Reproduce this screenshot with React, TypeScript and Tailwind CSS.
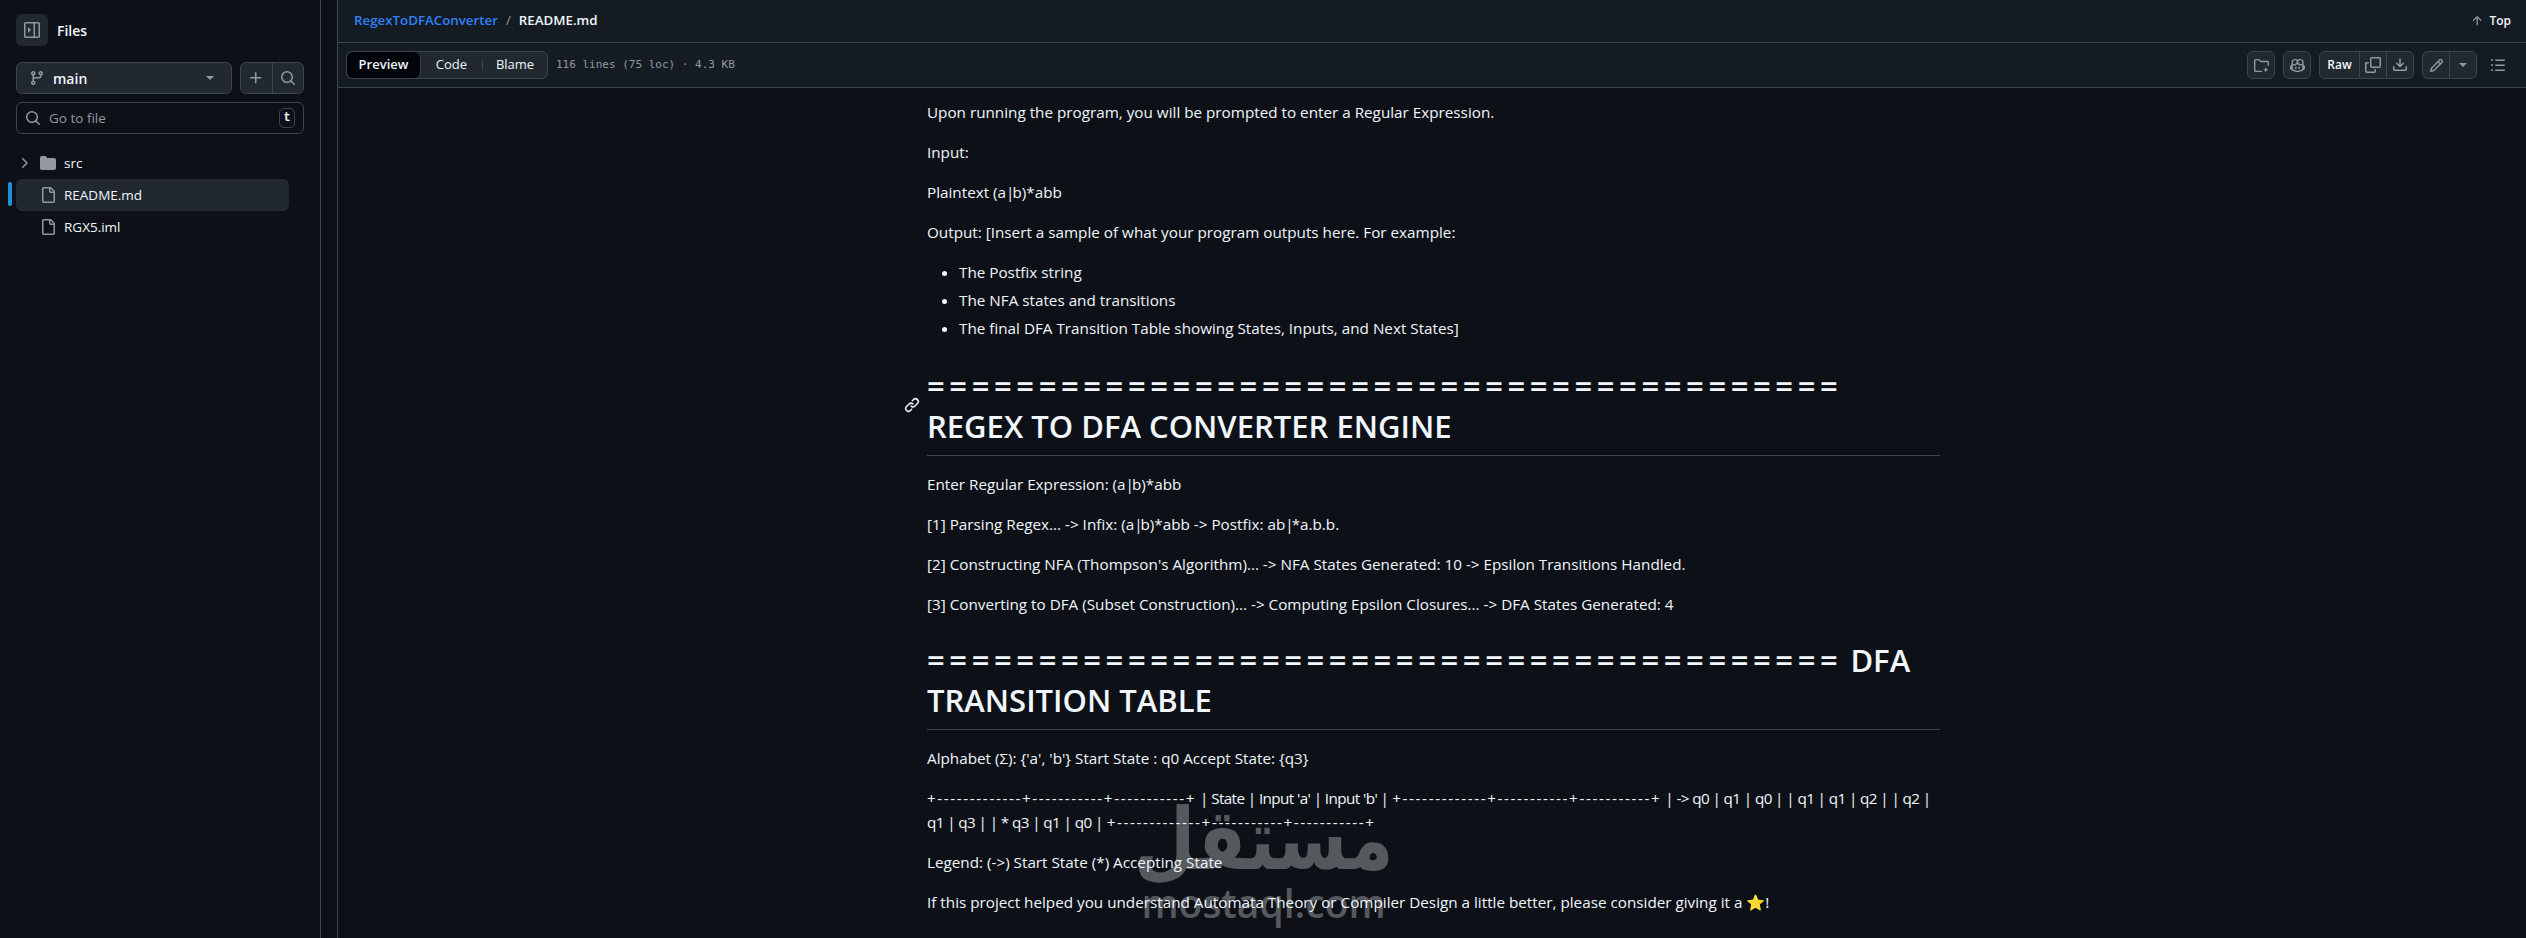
import type { ReactNode } from "react"

const font = { fontFamily: '"Open Sans", "Noto Sans", sans-serif' }

const Octicon = ({ d, size = 16, className = "" }: { d: string | string[]; size?: number; className?: string }) => (
  <svg width={size} height={size} viewBox="0 0 16 16" fill="currentColor" className={className}>
    {(Array.isArray(d) ? d : [d]).map((p) => (
      <path key={p} d={p} />
    ))}
  </svg>
)

const icons = {
  file: "M2 1.75C2 .784 2.784 0 3.75 0h6.586c.464 0 .909.184 1.237.513l2.914 2.914c.329.328.513.773.513 1.237v9.586A1.75 1.75 0 0 1 13.25 16h-9.5A1.75 1.75 0 0 1 2 14.25Zm1.75-.25a.25.25 0 0 0-.25.25v12.5c0 .138.112.25.25.25h9.5a.25.25 0 0 0 .25-.25V6h-2.75A1.75 1.75 0 0 1 9 4.25V1.5Zm6.75.062V4.25c0 .138.112.25.25.25h2.688l-.011-.013-2.914-2.914-.013-.011Z",
  plus: "M7.75 2a.75.75 0 0 1 .75.75V7h4.25a.75.75 0 0 1 0 1.5H8.5v4.25a.75.75 0 0 1-1.5 0V8.5H2.75a.75.75 0 0 1 0-1.5H7V2.75A.75.75 0 0 1 7.75 2Z",
  search: "M10.68 11.74a6 6 0 0 1-7.922-8.982 6 6 0 0 1 8.982 7.922l3.04 3.04a.749.749 0 0 1-.326 1.275.749.749 0 0 1-.734-.215ZM11.5 7a4.499 4.499 0 1 0-8.997 0A4.499 4.499 0 0 0 11.5 7Z",
  chevron: "M6.22 3.22a.75.75 0 0 1 1.06 0l4.25 4.25a.75.75 0 0 1 0 1.06l-4.25 4.25a.751.751 0 0 1-1.042-.018.751.751 0 0 1-.018-1.042L9.94 8 6.22 4.28a.75.75 0 0 1 0-1.06Z",
  folder: "M1.75 1A1.75 1.75 0 0 0 0 2.75v10.5C0 14.216.784 15 1.75 15h12.5A1.75 1.75 0 0 0 16 13.25v-8.5A1.75 1.75 0 0 0 14.25 3H7.5a.25.25 0 0 1-.2-.1l-.9-1.2C6.07 1.26 5.55 1 5 1H1.75Z",
  branch: "M9.5 3.25a2.25 2.25 0 1 1 3 2.122V6A2.5 2.5 0 0 1 10 8.5H6a1 1 0 0 0-1 1v1.128a2.251 2.251 0 1 1-1.5 0V5.372a2.25 2.25 0 1 1 1.5 0v1.836A2.493 2.493 0 0 1 6 7h4a1 1 0 0 0 1-1v-.628A2.25 2.25 0 0 1 9.5 3.25Zm-6 0a.75.75 0 1 0 1.5 0 .75.75 0 0 0-1.5 0Zm8.25-.75a.75.75 0 1 0 0 1.5.75.75 0 0 0 0-1.5ZM4.25 12a.75.75 0 1 0 0 1.5.75.75 0 0 0 0-1.5Z",
  sidebar: [
    "M6.823 7.823a.25.25 0 0 1 0 .354l-2.396 2.396A.25.25 0 0 1 4 10.396V5.604a.25.25 0 0 1 .427-.177Z",
    "M1.75 0h12.5C15.216 0 16 .784 16 1.75v12.5A1.75 1.75 0 0 1 14.25 16H1.75A1.75 1.75 0 0 1 0 14.25V1.75C0 .784.784 0 1.75 0ZM1.5 1.75v12.5c0 .138.112.25.25.25H9.5v-13H1.75a.25.25 0 0 0-.25.25ZM11 14.5h3.25a.25.25 0 0 0 .25-.25V1.75a.25.25 0 0 0-.25-.25H11Z",
  ],
  arrowUp: "M3.47 7.78a.75.75 0 0 1 0-1.06l4.25-4.25a.75.75 0 0 1 1.06 0l4.25 4.25a.751.751 0 0 1-.018 1.042.751.751 0 0 1-1.042.018L9 4.81v7.44a.75.75 0 0 1-1.5 0V4.81L4.53 7.78a.75.75 0 0 1-1.06 0Z",
  copy: [
    "M0 6.75C0 5.784.784 5 1.75 5h1.5a.75.75 0 0 1 0 1.5h-1.5a.25.25 0 0 0-.25.25v7.5c0 .138.112.25.25.25h7.5a.25.25 0 0 0 .25-.25v-1.5a.75.75 0 0 1 1.5 0v1.5A1.75 1.75 0 0 1 9.25 16h-7.5A1.75 1.75 0 0 1 0 14.25Z",
    "M5 1.75C5 .784 5.784 0 6.75 0h7.5C15.216 0 16 .784 16 1.75v7.5A1.75 1.75 0 0 1 14.25 11h-7.5A1.75 1.75 0 0 1 5 9.25Zm1.75-.25a.25.25 0 0 0-.25.25v7.5c0 .138.112.25.25.25h7.5a.25.25 0 0 0 .25-.25v-7.5a.25.25 0 0 0-.25-.25Z",
  ],
  download: [
    "M2.75 14A1.75 1.75 0 0 1 1 12.25v-2.5a.75.75 0 0 1 1.5 0v2.5c0 .138.112.25.25.25h10.5a.25.25 0 0 0 .25-.25v-2.5a.75.75 0 0 1 1.5 0v2.5A1.75 1.75 0 0 1 13.25 14Z",
    "M7.25 7.689V2a.75.75 0 0 1 1.5 0v5.689l1.97-1.969a.749.749 0 1 1 1.06 1.06l-3.25 3.25a.749.749 0 0 1-1.06 0L4.22 6.78a.749.749 0 1 1 1.06-1.06l1.97 1.969Z",
  ],
  pencil: "M11.013 1.427a1.75 1.75 0 0 1 2.474 0l1.086 1.086a1.75 1.75 0 0 1 0 2.474l-8.61 8.61c-.21.21-.47.364-.756.445l-3.251.93a.75.75 0 0 1-.927-.928l.929-3.25c.081-.286.235-.547.445-.758l8.61-8.61Zm.176 4.823L9.75 4.81l-6.286 6.287a.253.253 0 0 0-.064.108l-.558 1.953 1.953-.558a.253.253 0 0 0 .108-.064Zm1.238-3.763a.25.25 0 0 0-.354 0L10.811 3.75l1.439 1.44 1.263-1.263a.25.25 0 0 0 0-.354Z",
  list: "M5.75 2.5h8.5a.75.75 0 0 1 0 1.5h-8.5a.75.75 0 0 1 0-1.5Zm0 5h8.5a.75.75 0 0 1 0 1.5h-8.5a.75.75 0 0 1 0-1.5Zm0 5h8.5a.75.75 0 0 1 0 1.5h-8.5a.75.75 0 0 1 0-1.5ZM2 14a1 1 0 1 1 0-2 1 1 0 0 1 0 2Zm1-6a1 1 0 1 1-2 0 1 1 0 0 1 2 0ZM2 4a1 1 0 1 1 0-2 1 1 0 0 1 0 2Z",
  copilot: [
    "M7.998 15.035c-4.562 0-7.873-2.914-7.998-3.749V9.338c.085-.628.677-1.686 1.588-2.065.013-.07.024-.143.036-.218.029-.183.06-.384.126-.612-.201-.508-.254-1.084-.254-1.656 0-.87.128-1.769.693-2.484.579-.733 1.494-1.124 2.724-1.261 1.206-.134 2.262.034 2.944.765.05.053.096.108.139.165.044-.057.094-.112.143-.165.682-.731 1.738-.899 2.944-.765 1.23.137 2.145.528 2.724 1.261.566.715.693 1.614.693 2.484 0 .572-.053 1.148-.254 1.656.066.228.098.429.126.612.012.076.024.148.037.218.924.385 1.522 1.471 1.591 2.095v1.872c0 .766-3.351 3.795-8.002 3.795Zm0-1.485c2.28 0 4.584-1.11 5.002-1.433V7.862l-.023-.116c-.49.21-1.075.291-1.727.291-1.146 0-2.059-.327-2.71-.991A3.222 3.222 0 0 1 8 6.303a3.24 3.24 0 0 1-.544.743c-.65.664-1.563.991-2.71.991-.652 0-1.236-.081-1.727-.291l-.023.116v4.255c.419.323 2.722 1.433 5.002 1.433ZM6.762 2.83c-.193-.206-.637-.413-1.682-.297-1.019.113-1.479.404-1.713.7-.247.312-.369.789-.369 1.554 0 .793.129 1.171.308 1.371.162.181.519.379 1.442.379.853 0 1.339-.235 1.638-.54.315-.322.527-.827.617-1.553.117-.935-.037-1.395-.241-1.614Zm4.155-.297c-1.044-.116-1.488.091-1.681.297-.204.219-.359.679-.242 1.614.091.726.303 1.231.618 1.553.299.305.784.54 1.638.54.922 0 1.28-.198 1.442-.379.179-.2.308-.578.308-1.371 0-.765-.123-1.242-.37-1.554-.233-.296-.693-.587-1.713-.7Z",
    "M6.25 9.037a.75.75 0 0 1 .75.75v1.501a.75.75 0 0 1-1.5 0V9.787a.75.75 0 0 1 .75-.75Zm4.25.75v1.501a.75.75 0 0 1-1.5 0V9.787a.75.75 0 0 1 1.5 0Z",
  ],
  folderAi: [
    "M0 2.75C0 1.784.784 1 1.75 1H5c.55 0 1.07.26 1.4.7l.9 1.2a.25.25 0 0 0 .2.1h6.75c.966 0 1.75.784 1.75 1.75v3a.75.75 0 0 1-1.5 0v-3a.25.25 0 0 0-.25-.25H7.5c-.55 0-1.07-.26-1.4-.7l-.9-1.2a.25.25 0 0 0-.2-.1H1.75a.25.25 0 0 0-.25.25v10.5c0 .138.112.25.25.25H8a.75.75 0 0 1 0 1.5H1.75A1.75 1.75 0 0 1 0 13.25Z",
    "M12.5 9.5l.9 2.1 2.1.9-2.1.9-.9 2.1-.9-2.1-2.1-.9 2.1-.9Z",
  ],
  link: "m7.775 3.275 1.25-1.25a3.5 3.5 0 1 1 4.95 4.95l-2.5 2.5a3.5 3.5 0 0 1-4.95 0 .751.751 0 0 1 .018-1.042.751.751 0 0 1 1.042-.018 1.998 1.998 0 0 0 2.83 0l2.5-2.5a2.002 2.002 0 0 0-2.83-2.83l-1.25 1.25a.751.751 0 0 1-1.042-.018.751.751 0 0 1-.018-1.042Zm-4.69 9.64a1.998 1.998 0 0 0 2.83 0l1.25-1.25a.751.751 0 0 1 1.042.018.751.751 0 0 1 .018 1.042l-1.25 1.25a3.5 3.5 0 1 1-4.95-4.95l2.5-2.5a3.5 3.5 0 0 1 4.95 0 .751.751 0 0 1-.018 1.042.751.751 0 0 1-1.042.018 1.998 1.998 0 0 0-2.83 0l-2.5 2.5a1.998 1.998 0 0 0 0 2.83Z",
}

const Para = ({ children }: { children: ReactNode }) => <p className="mb-4 text-[15.25px] leading-[24px]">{children}</p>

const Equals = () => <span className="tracking-[4.6px]">=========================================</span>

// hyphen rows of the ascii table, the hyphens run wider in the original font
const Rule = () => <span className="tracking-[1.6px]">+-------------+-----------+-----------+</span>

const Cells = ({ children }: { children: ReactNode }) => <span className="tracking-[-0.6px]">{children}</span>

const Pipe = () => <span className="tracking-[-2px]">|</span>

const Caret = () => <span className="h-0 w-0 border-x-[4px] border-t-[4px] border-x-transparent border-t-[#9198a1]" />

const Sidebar = () => (
  <aside className="w-[321px] shrink-0 border-r border-[#3d444d] px-4 pt-[14px] text-[#f0f6fc]">
    <div className="flex items-center gap-[9px]">
      <div className="flex h-8 w-8 items-center justify-center rounded-md bg-[#212830] text-[#9198a1]">
        <Octicon d={icons.sidebar} />
      </div>
      <span className="text-[14px] font-semibold">Files</span>
    </div>
    <div className="mt-4 flex gap-2">
      <div className="flex h-8 w-[216px] items-center rounded-md border border-[#3d444d] bg-[#212830] pl-3 pr-[17px]">
        <Octicon d={icons.branch} className="text-[#9198a1]" />
        <span className="ml-2 flex-1 text-[14px] font-semibold">main</span>
        <Caret />
      </div>
      <div className="flex h-8 w-[64px] rounded-md border border-[#3d444d] bg-[#212830] text-[#9198a1]">
        <div className="flex flex-1 items-center justify-center border-r border-[#3d444d]"><Octicon d={icons.plus} /></div>
        <div className="flex flex-1 items-center justify-center"><Octicon d={icons.search} /></div>
      </div>
    </div>
    <div className="mt-2 flex h-8 w-[288px] items-center rounded-md border border-[#3d444d] pl-2 pr-2 text-[#9198a1]">
      <Octicon d={icons.search} />
      <span className="ml-2 flex-1 text-[13.5px]">Go to file</span>
      <span className="flex h-5 w-[16px] items-center justify-center rounded-[5px] border border-[#3d444d] font-['Liberation_Mono'] text-[12px] font-bold text-[#f0f6fc]">t</span>
    </div>
    <div className="relative mt-[13px] text-[13.5px] text-[#f0f6fc]">
      <div className="flex h-8 items-center">
        <Octicon d={icons.chevron} className="text-[#9198a1]" />
        <Octicon d={icons.folder} className="ml-2 text-[#9198a1]" />
        <span className="ml-2">src</span>
      </div>
      <div className="flex h-8 w-[273px] items-center rounded-md bg-[#212830] pl-6">
        <Octicon d={icons.file} className="text-[#9198a1]" />
        <span className="ml-2">README.md</span>
      </div>
      <div className="absolute left-[-8px] top-[35px] h-6 w-1 rounded-sm bg-[#1f8fe0]" />
      <div className="flex h-8 items-center pl-6">
        <Octicon d={icons.file} className="text-[#9198a1]" />
        <span className="ml-2">RGX5.iml</span>
      </div>
    </div>
  </aside>
)

const HeaderBar = () => (
  <div className="border-b border-[#3d444d] bg-[#151b23]">
    <div className="flex h-[43px] items-center justify-between border-b border-[#3d444d] pl-4 pr-[15px]">
      <div className="flex items-center text-[13.3px]">
        <span className="font-semibold text-[#2f81f7]">RegexToDFAConverter</span>
        <span className="mx-[8px] text-[#9198a1]">/</span>
        <span className="font-semibold text-[#f0f6fc]">README.md</span>
      </div>
      <div className="flex items-center gap-[5px] text-[12px] font-semibold text-[#f0f6fc]">
        <Octicon d={icons.arrowUp} size={14} className="text-[#9198a1]" />
        Top
      </div>
    </div>
    <div className="flex h-[44px] items-center justify-between pl-2 pr-[20px]">
      <div className="flex items-center gap-[8px]">
        <div className="flex h-7 w-[202px] rounded-md border border-[#3d444d] bg-[#212830] text-[13px] text-[#f0f6fc]">
          <div className="flex w-[74px] items-center justify-center rounded-md border-r border-[#3d444d] bg-[#010409] font-semibold">Preview</div>
          <div className="flex w-[61px] items-center justify-center">Code</div>
          <div className="my-2 w-px bg-[#3d444d]" />
          <div className="flex flex-1 items-center justify-center">Blame</div>
        </div>
        <span className="font-['DejaVu_Sans_Mono'] text-[11px] text-[#9198a1]">116 lines (75 loc) · 4.3 KB</span>
      </div>
      <div className="flex items-center text-[#9198a1]">
        <div className="flex h-7 w-7 items-center justify-center rounded-md border border-[#3d444d] bg-[#212830]"><Octicon d={icons.folderAi} size={15} /></div>
        <div className="ml-2 flex h-7 w-7 items-center justify-center rounded-md border border-[#3d444d] bg-[#212830]"><Octicon d={icons.copilot} size={15} /></div>
        <div className="ml-2 flex h-7 w-[95px] rounded-md border border-[#3d444d] bg-[#212830]">
          <div className="flex w-[40px] items-center justify-center border-r border-[#3d444d] text-[12px] font-semibold text-[#f0f6fc]">Raw</div>
          <div className="flex w-[27px] items-center justify-center border-r border-[#3d444d]"><Octicon d={icons.copy} /></div>
          <div className="flex flex-1 items-center justify-center"><Octicon d={icons.download} /></div>
        </div>
        <div className="ml-2 flex h-7 w-[55px] rounded-md border border-[#3d444d] bg-[#212830]">
          <div className="flex w-[27px] items-center justify-center border-r border-[#3d444d]"><Octicon d={icons.pencil} size={15} /></div>
          <div className="flex flex-1 items-center justify-center"><Caret /></div>
        </div>
        <Octicon d={icons.list} className="ml-[13px]" />
      </div>
    </div>
  </div>
)

const Readme = () => (
  <div className="relative z-10 ml-[589px] w-[1013px] pt-[12px] text-[#f0f6fc]">
    <Para>Upon running the program, you will be prompted to enter a Regular Expression.</Para>
    <Para>Input:</Para>
    <Para>Plaintext (a<Pipe />b)*abb</Para>
    <Para>Output: [Insert a sample of what your program outputs here. For example:</Para>
    <ul className="mb-4 list-disc pl-8 text-[15.25px] leading-[24px]">
      <li className="mb-1">The Postfix string</li>
      <li className="mb-1">The NFA states and transitions</li>
      <li>The final DFA Transition Table showing States, Inputs, and Next States]</li>
    </ul>
    <h2 className="relative mb-4 mt-[26px] border-b border-[#3d444d] pb-[9px] text-[31px] font-semibold leading-[40px]">
      <Octicon d={icons.link} className="absolute left-[-23px] top-[31px]" />
      <Equals />
      <br />
      REGEX TO DFA CONVERTER ENGINE
    </h2>
    <Para>Enter Regular Expression: (a<Pipe />b)*abb</Para>
    <Para>[1] Parsing Regex... -&gt; Infix: (a<Pipe />b)*abb -&gt; Postfix: ab<Pipe />*a.b.b.</Para>
    <Para>[2] Constructing NFA (Thompson's Algorithm)... -&gt; NFA States Generated: 10 -&gt; Epsilon Transitions Handled.</Para>
    <Para>[3] Converting to DFA (Subset Construction)... -&gt; Computing Epsilon Closures... -&gt; DFA States Generated: 4</Para>
    <h2 className="mb-4 mt-6 border-b border-[#3d444d] pb-[9px] text-[31px] font-semibold leading-[40px]">
      <Equals /> DFA TRANSITION TABLE
    </h2>
    <Para>Alphabet (Σ): {"{'a', 'b'}"} Start State : q0 Accept State: {"{q3}"}</Para>
    <Para>
      <Rule /> <Cells>| State | Input 'a' | Input 'b' |</Cells> <Rule /> <Cells>| -&gt; q0 | q1 | q0 | | q1 | q1 | q2 | | q2 | q1 | q3 | | * q3 | q1 | q0 |</Cells> <Rule />
    </Para>
    <Para>Legend: (-&gt;) Start State (*) Accepting State</Para>
    <Para>If this project helped you understand Automata Theory or Compiler Design a little better, please consider giving it a ⭐!</Para>
  </div>
)

export default function App() {
  return (
    <div className="relative flex h-[938px] w-[2526px] overflow-hidden bg-[#0d1117]" style={font}>
      <Sidebar />
      <div className="ml-4 flex-1 border-l border-[#3d444d]">
        <HeaderBar />
        <Readme />
      </div>
      <div className="pointer-events-none absolute left-[1142px] top-[799px] flex w-[243px] flex-col items-center text-[#55585d]">
        <span className="scale-y-[1.2] font-['DejaVu_Sans'] text-[71px] font-bold leading-[82px]">مستقل</span>
        <span className="font-['Open_Sans'] text-[39px] font-semibold leading-[44px]">mostaql.com</span>
      </div>
    </div>
  )
}
